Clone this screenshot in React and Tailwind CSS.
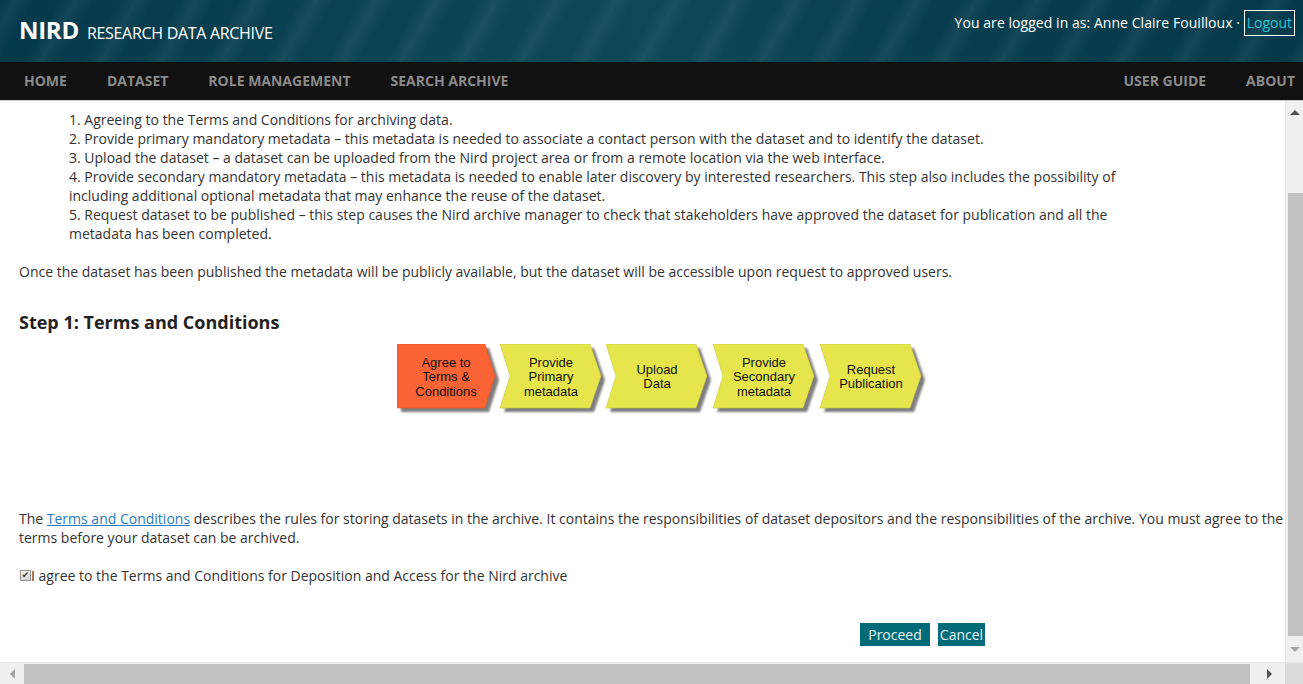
import React from "react";

const steps = [
  { x: 0, lines: ["Agree to", "Terms &", "Conditions"], orange: true },
  { x: 103, lines: ["Provide", "Primary", "metadata"] },
  { x: 209, lines: ["Upload", "Data"] },
  { x: 316, lines: ["Provide", "Secondary", "metadata"] },
  { x: 423, lines: ["Request", "Publication"] },
];

function Chevrons() {
  return (
    <svg width="540" height="74" viewBox="0 0 540 74">
      <defs>
        <filter id="sh" x="-10%" y="-10%" width="130%" height="130%">
          <feGaussianBlur stdDeviation="0.8" />
        </filter>
      </defs>
      {steps.map((s, i) => {
        const d = s.orange
          ? `M${s.x},0 L${s.x + 88},0 L${s.x + 98},32 L${s.x + 88},64 L${s.x},64 Z`
          : `M${s.x},0 L${s.x + 90},0 L${s.x + 101},32 L${s.x + 90},64 L${s.x},64 L${s.x + 10},32 Z`;
        const cx = s.orange ? s.x + 49 : s.x + 51;
        const startY = s.lines.length === 3 ? 22.5 : 29.5;
        return (
          <g key={i}>
            <path d={d} transform="translate(4,4)" fill="#7d7d7d" filter="url(#sh)" />
            <path d={d} fill={s.orange ? "#fa6334" : "#e6e64c"} stroke={s.orange ? "#e0572c" : "#c9c93e"} strokeWidth="0.6" />
            {s.lines.map((l, j) => (
              <text
                key={j}
                x={cx}
                y={startY + j * 14.5}
                textAnchor="middle"
                fontFamily="'Liberation Sans', Arial, sans-serif"
                fontSize="13"
                fill="#111"
              >
                {l}
              </text>
            ))}
          </g>
        );
      })}
    </svg>
  );
}

export default function App() {
  return (
    <div className="w-[1303px] h-[684px] overflow-hidden flex flex-col font-['Open_Sans',sans-serif] text-[14px] text-[#333]">
      {/* Header */}
      <header className="h-[62px] shrink-0 flex items-start justify-between bg-[#063c4d] bg-[repeating-linear-gradient(120deg,rgba(255,255,255,0)_0px,rgba(255,255,255,0.06)_14px,rgba(255,255,255,0)_30px,rgba(255,255,255,0)_52px),linear-gradient(90deg,#04394a_0%,#0a4253_25%,#0d4758_50%,#073d4e_75%,#053a4b_100%)]">
        <div className="flex items-baseline pl-[19px] pt-[15px]">
          <span className="text-[24px] font-bold text-white tracking-[-0.3px] leading-[30px]">NIRD</span>
          <span className="ml-[8px] text-[16px] text-white tracking-[-0.3px] leading-[30px]">RESEARCH DATA ARCHIVE</span>
        </div>
        <div className="flex items-center pt-[10px] pr-[8px]">
          <span className="text-white text-[14px] leading-[26px] tracking-[0.05px]">You are logged in as: Anne Claire Fouilloux ·&nbsp;</span>
          <span className="border border-white text-[#2cc3d2] text-[14px] leading-[24px] px-[2px]">Logout</span>
        </div>
      </header>

      {/* Nav */}
      <nav className="h-[36px] shrink-0 bg-[#111111] flex items-center justify-between pl-[4px] pb-[2px] border-b border-[#cfcfcf] box-content">
        <div className="flex">
          {["HOME", "DATASET", "ROLE MANAGEMENT", "SEARCH ARCHIVE"].map((t) => (
            <span key={t} className="px-[20px] text-[14px] font-bold text-[#8a8a8a]">{t}</span>
          ))}
        </div>
        <div className="flex pr-[8px]">
          <span className="pl-[20px] pr-[40px] text-[14px] font-bold text-[#8a8a8a]">USER GUIDE</span>
          <span className="text-[14px] font-bold text-[#8a8a8a]">ABOUT</span>
        </div>
      </nav>

      {/* Main area with fake scrollbars */}
      <div className="flex-1 flex min-h-0">
        <main className="flex-1 overflow-hidden pl-[19px] pt-[9px] leading-[19px]">
          <div className="ml-[50px] w-[1056px]">
            <p>1. Agreeing to the Terms and Conditions for archiving data.</p>
            <p>2. Provide primary mandatory metadata – this metadata is needed to associate a contact person with the dataset and to identify the dataset.</p>
            <p>3. Upload the dataset – a dataset can be uploaded from the Nird project area or from a remote location via the web interface.</p>
            <p>4. Provide secondary mandatory metadata – this metadata is needed to enable later discovery by interested researchers. This step also includes the possibility of including additional optional metadata that may enhance the reuse of the dataset.</p>
            <p>5. Request dataset to be published – this step causes the Nird archive manager to check that stakeholders have approved the dataset for publication and all the metadata has been completed.</p>
          </div>
          <p className="mt-[19px]">Once the dataset has been published the metadata will be publicly available, but the dataset will be accessible upon request to approved users.</p>
          <h2 className="mt-[30px] text-[18px] font-bold leading-[22px] text-[#222]">Step 1: Terms and Conditions</h2>
          <div className="mt-[11px] ml-[378px] h-[165px]">
            <Chevrons />
          </div>
          <p>
            The <a className="text-[#2a7bbf] underline">Terms and Conditions</a> describes the rules for storing datasets in the archive. It contains the responsibilities of dataset depositors and the responsibilities of the archive. You must agree to the terms before your dataset can be archived.
          </p>
          <div className="mt-[19px] flex items-center">
            <span className="ml-[1px] w-[11px] h-[11px] border border-[#8f8f8f] bg-[linear-gradient(#f4f4f4,#d6d6d6)] flex items-center justify-center text-[9px] leading-none text-[#333] font-['DejaVu_Sans',sans-serif]">✔</span>
            <span>I agree to the Terms and Conditions for Deposition and Access for the Nird archive</span>
          </div>
          <div className="mt-[38px] ml-[841px] flex gap-[8px]">
            <button className="h-[23px] w-[70px] bg-[#036b78] text-[#e8f4f4] text-[14px] leading-[23px] text-center">Proceed</button>
            <button className="h-[23px] w-[47px] bg-[#036b78] text-[#e8f4f4] text-[14px] leading-[23px] text-center">Cancel</button>
          </div>
        </main>
        {/* vertical scrollbar */}
        <div className="w-[18px] shrink-0 bg-[#f0f0f0] border-l border-[#e6e6e6] flex flex-col items-center">
          <div className="h-[18px] w-full flex items-center justify-center pt-[4px]">
            <div className="w-0 h-0 border-l-[5px] border-r-[5px] border-b-[5px] border-l-transparent border-r-transparent border-b-[#505050]" />
          </div>
          <div className="mt-[74px] h-[443px] w-[16px] ml-[2px] bg-[#c1c1c1]" />
          <div className="flex-1 w-full flex items-center justify-center">
            <div className="w-0 h-0 border-l-[5px] border-r-[5px] border-t-[5px] border-l-transparent border-r-transparent border-t-[#a3a3a3]" />
          </div>
        </div>
      </div>
      {/* horizontal scrollbar */}
      <div className="h-[22px] shrink-0 flex bg-[#f0f0f0] border-t border-[#e6e6e6]">
        <div className="w-[24px] flex items-center justify-center">
          <div className="w-0 h-0 border-t-[5px] border-b-[5px] border-r-[5px] border-t-transparent border-b-transparent border-r-[#a3a3a3]" />
        </div>
        <div className="w-[1226px] mt-[1px] bg-[#c1c1c1]" />
        <div className="w-[35px] flex items-center justify-center pl-[4px]">
          <div className="w-0 h-0 border-t-[5px] border-b-[5px] border-l-[5px] border-t-transparent border-b-transparent border-l-[#505050]" />
        </div>
        <div className="w-[18px] bg-[#dcdcdc]" />
      </div>
    </div>
  );
}
